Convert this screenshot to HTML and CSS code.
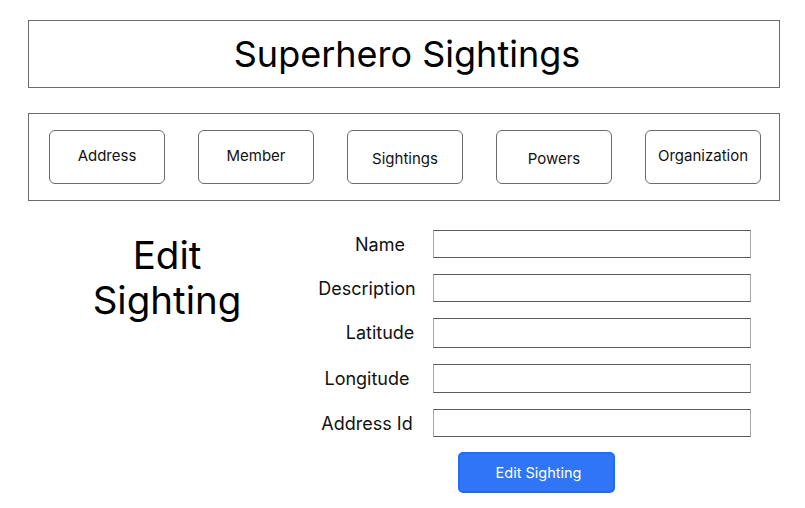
FILE: index.html
```html
<!DOCTYPE html>
<html>
<head>
<meta charset="utf-8">
<link rel="stylesheet" href="styles.css">
</head>
<body>
<div class="page">
  <header class="title-box">
    <h1 class="title">Superhero Sightings</h1>
  </header>
  <nav class="nav-box">
    <button class="nav-btn">Address</button>
    <button class="nav-btn">Member</button>
    <button class="nav-btn nav-btn--low">Sightings</button>
    <button class="nav-btn nav-btn--low">Powers</button>
    <button class="nav-btn">Organization</button>
  </nav>
  <main class="main">
    <div class="heading-col">
      <h2 class="heading">Edit<br>Sighting</h2>
    </div>
    <form class="form">
      <div class="row"><label class="label label--shift">Name</label><input class="field" type="text"></div>
      <div class="row"><label class="label">Description</label><input class="field" type="text"></div>
      <div class="row"><label class="label label--shift">Latitude</label><input class="field field--tall" type="text"></div>
      <div class="row"><label class="label">Longitude</label><input class="field field--tall" type="text"></div>
      <div class="row"><label class="label">Address Id</label><input class="field" type="text"></div>
      <div class="submit-row"><button type="button" class="submit">Edit Sighting</button></div>
    </form>
  </main>
</div>
</body>
</html>
```

FILE: styles.css
```css
* { box-sizing: border-box; }
html, body { margin: 0; padding: 0; background: #fff; }
body { font-family: Inter, "Noto Sans", sans-serif; color: #000; }

.page { padding: 20px 25px 0 28px; width: 805px; }

.title-box {
  height: 68px;
  border: 1px solid #6b6b6b;
  display: flex;
  align-items: center;
  justify-content: center;
}
.title {
  margin: 0;
  font-weight: 400;
  font-size: 36px;
  line-height: 1;
  padding-left: 6px;
}

.nav-box {
  margin-top: 25px;
  height: 88px;
  border: 1px solid #6b6b6b;
  display: flex;
  align-items: flex-start;
  justify-content: space-between;
  padding: 16px 18px 0 20px;
}
.nav-btn {
  width: 116px;
  height: 54px;
  border: 1px solid #6b6b6b;
  border-radius: 6px;
  background: #fff;
  font-family: Inter, "Noto Sans", sans-serif;
  font-size: 15px;
  color: #111;
  padding: 0 0 4px 0;
}
.nav-btn--low { padding: 2px 0 0 0; }

.main {
  display: flex;
  margin-top: 29px;
}
.heading-col {
  width: 278px;
  display: flex;
  justify-content: center;
}
.heading {
  margin: 3px 0 0 0;
  font-weight: 400;
  font-size: 38.5px;
  line-height: 45px;
  text-align: center;
}

.form {
  margin-left: 10px;
  display: flex;
  flex-direction: column;
}
.row {
  display: flex;
  align-items: center;
  margin-bottom: 16px;
}
.label {
  width: 102px;
  margin-right: 15px;
  text-align: center;
  font-size: 18px;
  color: #111;
}
.label--shift { padding-left: 26px; }
.field {
  width: 318px;
  height: 28px;
  border: 1px solid #a8a8a8;
  border-top-color: #5c5c5c;
  border-bottom-color: #5c5c5c;
  background: #fff;
  margin: 0;
  padding: 0;
}
.field--tall { height: 29.5px; }
.submit-row {
  padding-left: 142px;
  margin-top: -1px;
}
.submit {
  width: 157px;
  height: 41px;
  background: #2f75f6;
  border: 2px solid #1e6cff;
  border-radius: 5px;
  color: #fff;
  font-family: Inter, "Noto Sans", sans-serif;
  font-size: 14.5px;
  padding: 0 0 0 4px;
}
```
